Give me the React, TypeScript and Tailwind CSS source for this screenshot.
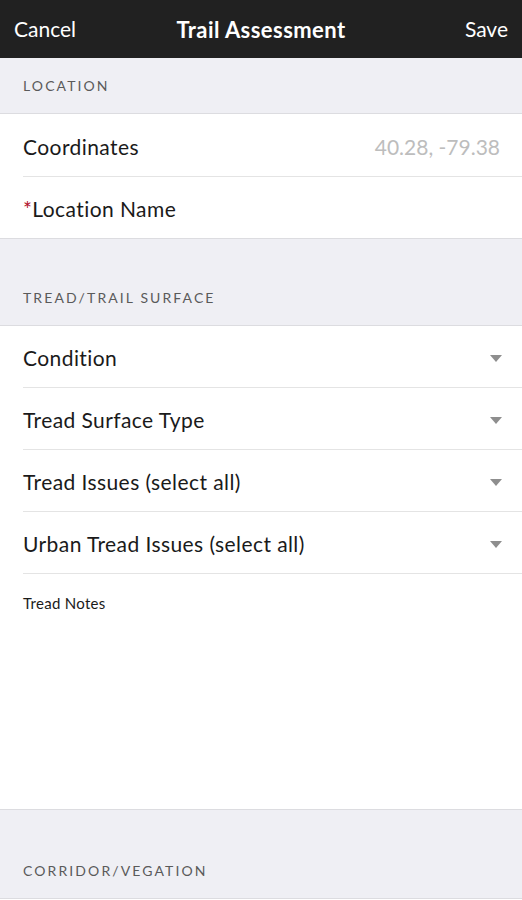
import React from "react";

const font = { fontFamily: "Lato, 'Open Sans', sans-serif" };

function Caret() {
  return (
    <svg width="12" height="7" viewBox="0 0 12 7" className="shrink-0">
      <path d="M0 0 L12 0 L6 7 Z" fill="#8e8e8e" />
    </svg>
  );
}

function SectionHeader({ label, className = "" }: { label: string; className?: string }) {
  return (
    <div className={`bg-[#efeff4] flex items-end px-[23px] border-b border-[#dcdce0] ${className}`}>
      <span className="text-[14px] tracking-[0.15em] text-[#5a5a5a] uppercase">{label}</span>
    </div>
  );
}

function SelectRow({ label }: { label: string }) {
  return (
    <div className="pl-[23px]">
      <div className="h-[62px] pt-[3px] flex items-center justify-between pr-[20px] border-b border-[#e4e4e4]">
        <span className="text-[21px] tracking-[0.02em] text-[#1a1a1a]">{label}</span>
        <Caret />
      </div>
    </div>
  );
}

export default function App() {
  return (
    <div style={font} className="w-[522px] h-[900px] overflow-hidden bg-white">
      <div className="h-[58px] bg-[#212121] flex items-center justify-between px-[14px] relative">
        <span className="text-white text-[21px]">Cancel</span>
        <span className="text-white text-[22px] tracking-[0.02em] font-bold absolute left-1/2 -translate-x-1/2 whitespace-nowrap">
          Trail Assessment
        </span>
        <span className="text-white text-[21px]">Save</span>
      </div>

      <SectionHeader label="Location" className="h-[56px] pb-[17px]" />

      <div className="bg-white pl-[23px] border-b border-[#dcdce0]">
        <div className="h-[63px] pt-[3px] flex items-center justify-between pr-[22px] border-b border-[#e4e4e4]">
          <span className="text-[21px] tracking-[0.02em] text-[#1a1a1a]">Coordinates</span>
          <span className="text-[21px] text-[#bdbdbd]">40.28, -79.38</span>
        </div>
        <div className="h-[61px] pt-[2px] flex items-center">
          <span className="text-[21px] tracking-[0.02em] text-[#1a1a1a]">
            <span className="text-[#b0102a]">*</span>Location Name
          </span>
        </div>
      </div>

      <SectionHeader label="Tread/Trail Surface" className="h-[87px] pb-[17px]" />

      <div className="bg-white">
        <SelectRow label="Condition" />
        <SelectRow label="Tread Surface Type" />
        <SelectRow label="Tread Issues (select all)" />
        <SelectRow label="Urban Tread Issues (select all)" />
        <div className="h-[236px] pl-[23px] pt-[17px] border-b border-[#dcdce0]">
          <span className="text-[15px] tracking-[0.02em] text-[#1a1a1a]">Tread Notes</span>
        </div>
      </div>

      <SectionHeader label="Corridor/Vegation" className="h-[89px] pb-[17px]" />
    </div>
  );
}
